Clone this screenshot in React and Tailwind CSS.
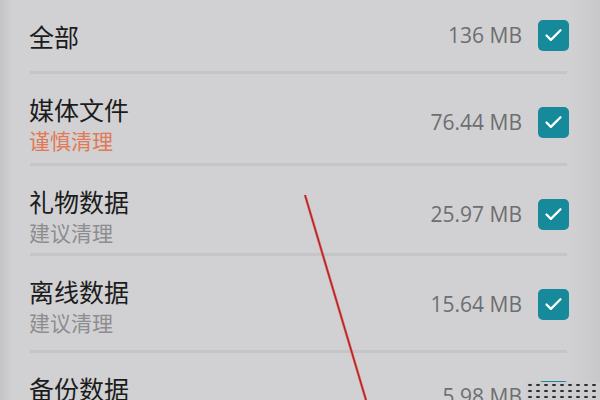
import { Check } from "lucide-react";

const ITEMS = [
  { name: "全部", size: "136 MB", h: "h-[74px]" },
  { name: "媒体文件", size: "76.44 MB", hint: "谨慎清理", warn: true, h: "h-[92px]" },
  { name: "礼物数据", size: "25.97 MB", hint: "建议清理", h: "h-[90px]" },
  { name: "离线数据", size: "15.64 MB", hint: "建议清理", h: "h-[97px]" },
  { name: "备份数据", size: "5.98 MB", hint: "建议清理", h: "h-[100px]", last: true },
];

function Box() {
  return (
    <div className="flex h-[31px] w-[31px] shrink-0 items-center justify-center rounded-[5px] bg-[#16899a]">
      <Check size={21} strokeWidth={2.6} className="text-white" />
    </div>
  );
}

function Row({ item }) {
  const plain = !item.hint;
  return (
    <div className={`flex flex-col ${item.h}`}>
      <div className={`flex flex-1 pl-[29px] pr-[31px] ${plain ? "items-center" : "items-start"}`}>
        <div className={`flex-1 ${plain ? "" : "pt-[19px]"}`}>
          <div className="text-[25px] leading-[32px] text-[#1c1c1c]">{item.name}</div>
          {item.hint && (
            <div className={`text-[21px] leading-[30px] ${item.warn ? "text-[#e07a55]" : "text-[#8d8d8f]"}`}>
              {item.hint}
            </div>
          )}
        </div>
        <div className={`flex items-center gap-[16px] ${plain ? "" : item.last ? "pt-[28px]" : "pt-[33px]"}`}>
          <span className="font-['Open_Sans',sans-serif] text-[21px] text-[#6e6e70]">{item.size}</span>
          <Box />
        </div>
      </div>
      {!item.last && <div className="ml-[30px] mr-[33px] h-[3px] shrink-0 bg-[#c5c5c7]" />}
    </div>
  );
}

export default function App() {
  return (
    <div className="relative h-[400px] w-[600px] overflow-hidden bg-[#d1d1d3] font-['Noto_Sans_CJK_SC','Noto_Sans',sans-serif]">
      <div className="absolute inset-y-0 left-0 w-[12px] bg-gradient-to-r from-[#c4c4c6] to-transparent" />
      <div className="absolute inset-y-0 right-0 w-[30px] bg-gradient-to-l from-[#c8c8ca] to-transparent" />
      <div className="relative flex flex-col">
        {ITEMS.map((it) => (
          <Row key={it.name} item={it} />
        ))}
      </div>
      <svg className="absolute inset-0" width="600" height="400">
        <line x1="305" y1="195" x2="366" y2="400" stroke="#f04a4a" strokeWidth="2.5" />
        <line x1="305" y1="195" x2="366" y2="400" stroke="#8a2a2a" strokeWidth="1" />
      </svg>
      <div className="absolute bottom-0 right-0 h-[18px] w-[74px] bg-[#cdcdcf] bg-[radial-gradient(#2e2e2e_1.5px,transparent_2px)] bg-[length:8px_6px]" />
    </div>
  );
}
